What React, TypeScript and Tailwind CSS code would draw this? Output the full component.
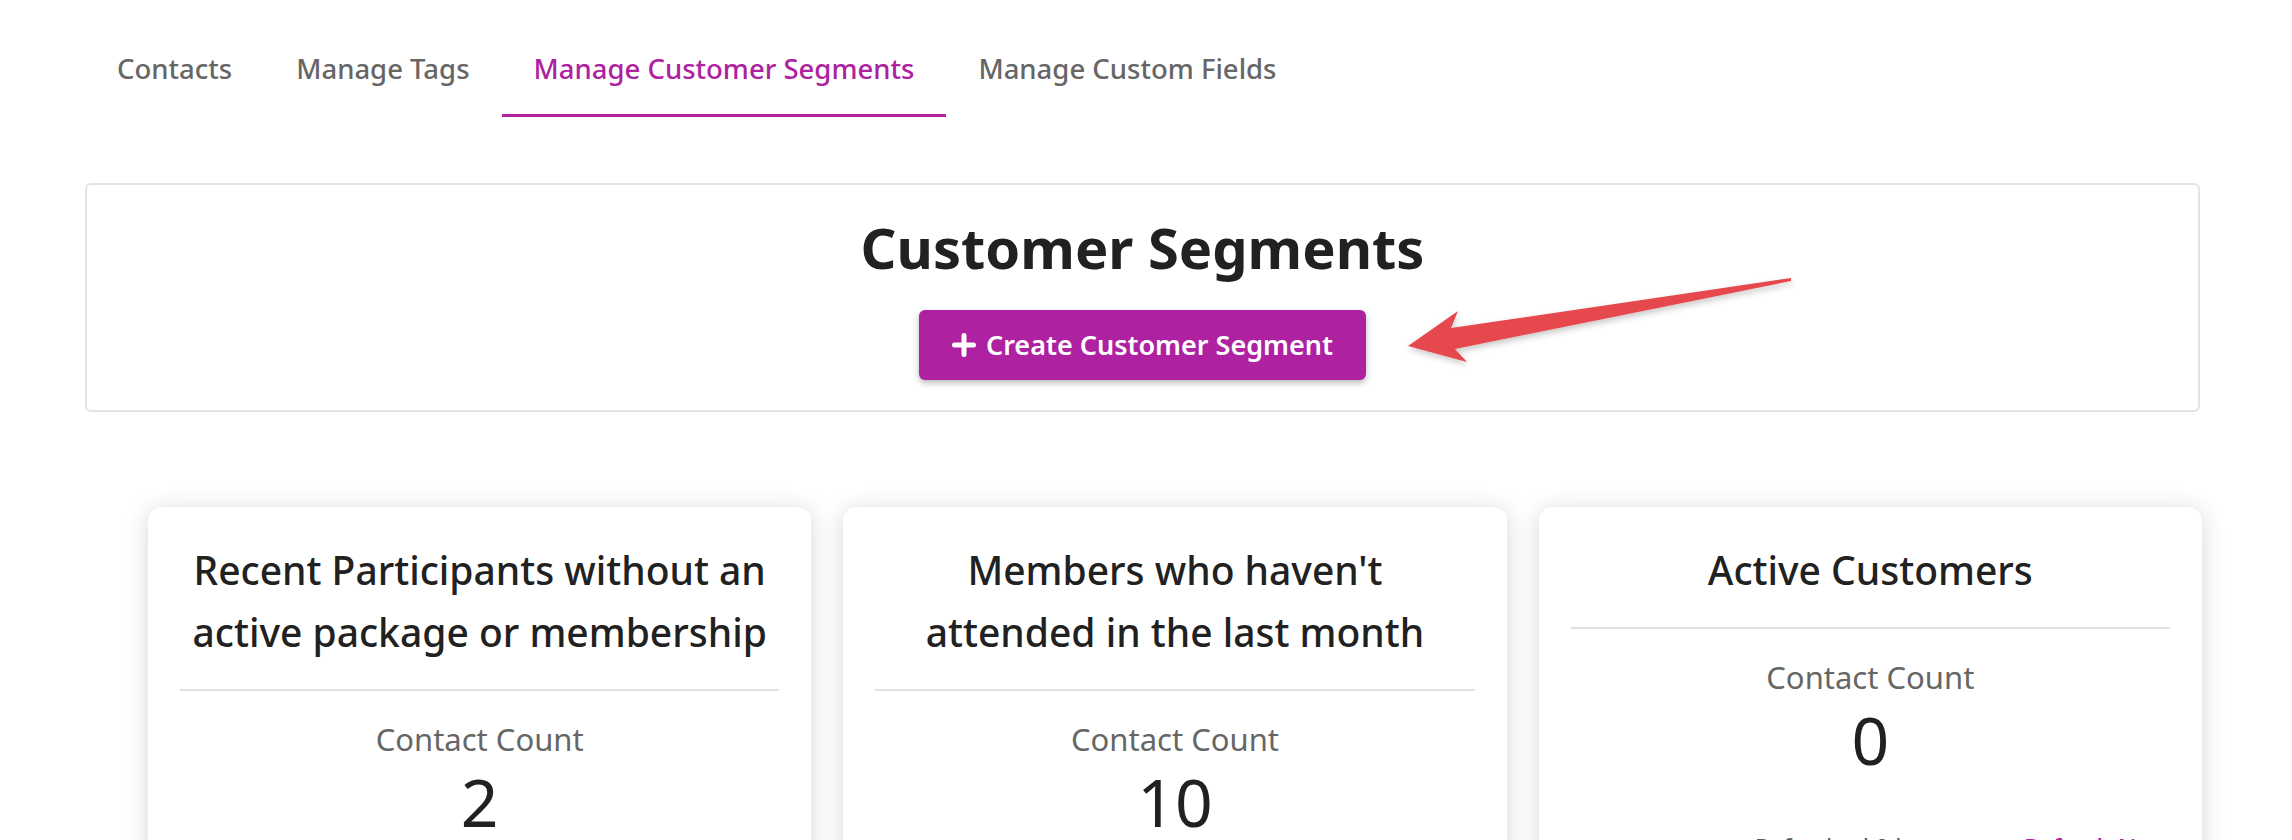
import React from "react";

const PURPLE = "#ae21a0";

function PlusIcon() {
  return (
    <svg width="24" height="24" viewBox="0 0 24 24" className="shrink-0">
      <path d="M12 2.5v19M2.5 12h19" stroke="white" strokeWidth="5" strokeLinecap="round" />
    </svg>
  );
}

type Seg = { title: string[]; count: string };

const segments: Seg[] = [
  { title: ["Recent Participants without an", "active package or membership"], count: "2" },
  { title: ["Members who haven't", "attended in the last month"], count: "10" },
  { title: ["Active Customers"], count: "0" },
];

function SegmentCard({ seg }: { seg: Seg }) {
  return (
    <div className="bg-white rounded-[14px] shadow-[0_3px_24px_rgba(0,0,0,0.16)] px-[32px] pt-[32px] pb-[32px] flex flex-col">
      <div className="text-center text-[39px] leading-[62px] font-medium text-[#212121]">
        {seg.title.map((t) => (
          <div key={t}>{t}</div>
        ))}
      </div>
      <div className="mt-[26px] h-[2px] bg-[#e0e0e0]" />
      <div className="mt-[28px] text-center text-[31px] leading-[40px] text-[#666666]">Contact Count</div>
      <div className="mt-[2px] text-center text-[66px] leading-[80px] text-[#212121]">{seg.count}</div>
      <div className="mt-[52px] flex justify-end items-baseline gap-[14px] text-[24px] leading-[32px]">
        <span className="text-[#555555]">Refreshed 0 hours ago</span>
        <span className="text-[#ae21a0] font-medium">Refresh Now</span>
      </div>
    </div>
  );
}

export default function App() {
  const tabs = ["Contacts", "Manage Tags", "Manage Customer Segments", "Manage Custom Fields"];
  return (
    <div
      className="relative w-[2292px] min-h-[840px] bg-white overflow-hidden"
      style={{ fontFamily: '"Noto Sans", "Open Sans", sans-serif' }}
    >
      <div className="pl-[85px] pr-[92px] pt-[24px]">
        <div className="flex">
          {tabs.map((t, i) => {
            const active = i === 2;
            return (
              <div
                key={t}
                className={
                  active
                    ? "px-[32px] pt-[25px] pb-[25px] border-b-[3px] border-[#ae21a0] text-[27.5px] leading-[40px] font-medium text-[#ae21a0]"
                    : "px-[32px] pt-[25px] pb-[25px] border-b-[3px] border-transparent text-[27.5px] leading-[40px] font-medium text-[#666666]"
                }
              >
                {t}
              </div>
            );
          })}
        </div>

        <div className="mt-[66px] border-2 border-[#e3e3e3] rounded-[6px] pt-[29px] pb-[30px] flex flex-col items-center">
          <h1 className="text-[56px] leading-[66px] font-bold text-[#212121]">Customer Segments</h1>
          <button
            className="mt-[30px] h-[70px] px-[33px] flex items-center gap-[10px] rounded-[6px] text-white text-[27px] font-semibold shadow-[0_3px_6px_rgba(0,0,0,0.28)]"
            style={{ backgroundColor: PURPLE }}
          >
            <PlusIcon />
            <span>Create Customer Segment</span>
          </button>
        </div>
      </div>

      <div className="mt-[95px] ml-[148px] mr-[90px] grid grid-cols-3 gap-[32px]">
        {segments.map((s) => (
          <SegmentCard key={s.count} seg={s} />
        ))}
      </div>

      <svg
        className="absolute left-0 top-0 pointer-events-none"
        width="2292"
        height="840"
        viewBox="0 0 2292 840"
      >
        <defs>
          <filter id="ashadow" x="-10%" y="-50%" width="120%" height="200%">
            <feDropShadow dx="1" dy="3" stdDeviation="3" floodColor="#000" floodOpacity="0.22" />
          </filter>
        </defs>
        <polygon
          points="1791,278 1451,328 1458,311 1408,346 1467,362 1455,349 1791,281"
          fill="#e5494d"
          filter="url(#ashadow)"
        />
      </svg>
    </div>
  );
}
